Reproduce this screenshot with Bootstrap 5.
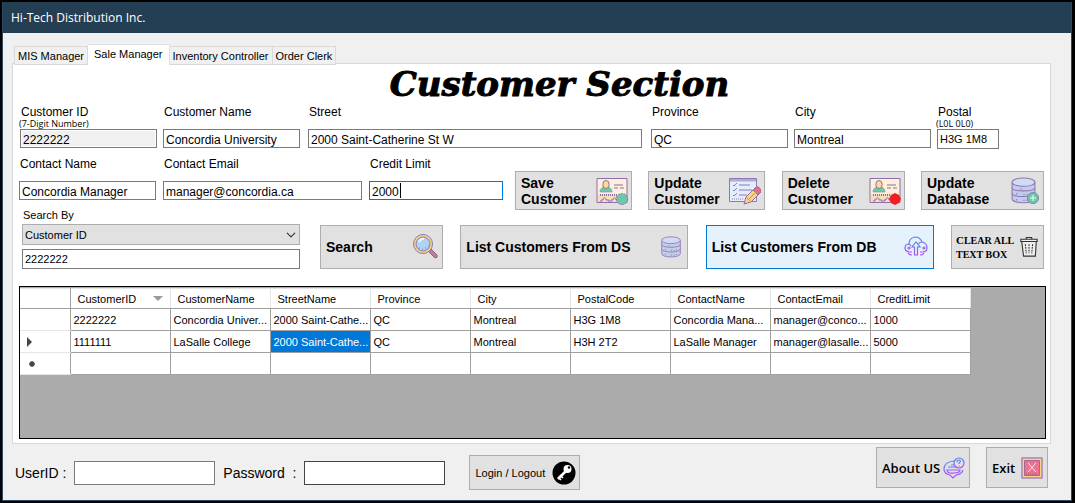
<!DOCTYPE html>
<html lang="en">
<head>
<meta charset="utf-8">
<meta name="viewport" content="width=device-width, initial-scale=1">
<title>Hi-Tech Distribution Inc.</title>
<link href="https://cdn.jsdelivr.net/npm/bootstrap@5.3.0/dist/css/bootstrap.min.css" rel="stylesheet">
<style>
  :root { --face: #f0f0f0; --edge: #7a7a7a; --btn: #e1e1e1; --btn-edge: #adadad; --line: #a0a0a0; --accent: #0078d7; }
  body { background: #000; color: #000; font: 12px/14px "Liberation Sans", Arial, sans-serif; padding: 2px 3px 2px 2px; }
  .compact { font-family: "Liberation Sans", Arial, sans-serif; font-size: 11px; }
  .app-window { background: var(--face); border: 1px solid #2b4a62; border-top: 0; }
  .title-strip { background: #243f54; color: #fff; height: 31px; padding: 0 8px; font: 12px/31px "Open Sans", "Noto Sans", sans-serif; }
  .work-area { padding: 11px 20px 0 9px; }
  .tab-strip { padding-left: 2px; border: 0; margin-bottom: -1px; position: relative; }
  .tab-strip .nav-link { color: #000; border: 1px solid #d9d9d9; border-left-width: 0; border-radius: 0; background: var(--face); padding: 0 3px; line-height: 18px; height: 19px; white-space: nowrap; }
  .tab-strip .first-tab { border-left-width: 1px; }
  .tab-strip .nav-link.active { background: #fff; color: #000; border-bottom: 0; height: 21px; padding: 0 6px; line-height: 19px; }
  .sheet { background: #fff; border: 1px solid #d9d9d9; padding: 0 4px 4px 6px; }
  h1 { font: italic bold 34px/41px "DejaVu Serif", serif; -webkit-text-stroke: 1px #000; margin: 0; padding-left: 54px; text-align: center; }
  .line-one { padding: 0 47px 0 1px; gap: 6px; }
  .line-one .roomy { padding: 0 3px 0 2px; }
  .line-two { padding-right: 2px; margin-top: 8px; gap: 7px; }
  .line-two .actions { padding: 14px 0 0 5px; }
  .line-three { padding: 0 2px 0 3px; gap: 20px; }
  .line-one label { display: block; height: 24px; padding-left: 1px; white-space: nowrap; }
  .line-one small { display: block; font: 9px/10px "Open Sans", "Noto Sans", sans-serif; margin-left: -2px; }
  .line-two label { display: block; height: 24px; padding-left: 1px; }
  .search-by label { display: block; height: 14px; line-height: 10px; padding-left: 1px; }
  .form-control, .form-select { border: 1px solid var(--edge); border-radius: 0; color: #000; font-size: 12px; line-height: 14px; padding: 2px 2px 0; height: 19px; min-height: 0; background-color: #fff; }
  .form-control[readonly] { background: var(--face); box-shadow: inset 0 0 0 1px #fff; }
  .form-control.editing { border-color: var(--accent); background: linear-gradient(#000, #000) 30px 1px / 1px 15px no-repeat #fff; }
  .form-control.compact, .form-select.compact { font-size: 11px; height: 20px; padding: 0 2px; }
  .form-select.compact { height: 21px; background-color: var(--btn); border-color: var(--btn-edge); background-position: right 3px center; background-size: 10px 10px; }
  .w-s { width: 62px; } .w-m { width: 137px; } .w-c { width: 134px; } .w-l { width: 199px; } .w-xl { width: 278px; }
  .btn { --bs-btn-color: #000; --bs-btn-bg: #e1e1e1; --bs-btn-border-color: #adadad; --bs-btn-border-radius: 0; --bs-btn-padding-x: 5px; --bs-btn-padding-y: 0; --bs-btn-font-size: 14px; --bs-btn-line-height: 16px; --bs-btn-font-weight: 700; display: flex; align-items: center; justify-content: space-between; text-align: left; }
  .btn svg { flex: none; }
  .tall { height: 39px; width: 117px; padding: 0 3px 0 5px; }
  .tall.wider { width: 123px; }
  .big { height: 44px; width: 228px; }
  .big.find { width: 123px; padding-right: 3px; }
  .big.wipe { width: 93px; font: bold 10px/14px "Liberation Serif", serif; padding: 0 4px; }
  .wipe .cap { font-size: 11px; }
  .btn.hot { --bs-btn-bg: #e5f1fb; --bs-btn-border-color: #0078d7; }
  .data-well { margin-top: 17px; background: #ababab; border: 1px solid #000; padding-top: 1px; }
  .data-well table { width: 950px; table-layout: fixed; border-collapse: collapse; background: #fff; line-height: 14px; border-top: 1px solid #e5e5e5; }
  .data-well th, .data-well td { border: 1px solid var(--line); border-left: 0; height: 22px; padding: 0 2px 0 3px; white-space: nowrap; overflow: hidden; }
  .data-well thead th { border-top-color: #e5e5e5; border-right-color: #e5e5e5; font-weight: 400; height: 20px; padding: 0 7px; }
  .data-well thead th:first-child { border-right-color: var(--line); }
  .data-well tbody th { padding-left: 5px; border-bottom-color: #e5e5e5; }
  .data-well td.picked { background: var(--accent); color: #fff; }
  .foot { padding: 3px 3px 10px 3px; }
  .foot label { font-size: 14px; line-height: 24px; white-space: pre; }
  .foot .form-control { width: 141px; height: 24px; }
  .foot .login { height: 35px; width: 111px; font-weight: 400; padding: 0 3px 0 5px; }
  .foot .end { height: 41px; font: 600 13px/18px "Open Sans", "Noto Sans", sans-serif; padding: 0 4px 0 5px; }
  .about { width: 94px; } .leave { width: 62px; }
  .dark { border-color: #444; }
</style>
</head>
<body class="min-vh-100 d-flex flex-column">
<svg width="0" height="0" class="position-absolute" aria-hidden="true">
  <defs>
    <linearGradient id="violet" x1="0" y1="0" x2="0" y2="1"><stop offset="0" stop-color="#4f8df5"/><stop offset="1" stop-color="#b44df0"/></linearGradient>
    <symbol id="card-face" viewBox="0 0 32 28">
      <path d="M1 1.500h30v24H1z" fill="#fdf0dc" stroke="#8f6da8"/>
      <path d="M2 17h28v8H2z" fill="#f7dcc0"/>
      <path d="M4 15c0-4 3-5 6-5s6 1 6 5z" fill="#6bc9a8" stroke="#7b9d9d" stroke-width=".7"/>
      <ellipse cx="10" cy="7.500" rx="3.200" ry="4" fill="#fbdc95" stroke="#8f6da8"/>
      <path d="M18 8h9M18 11h4M24 11h4" stroke="#8f6da8"/>
      <path d="M4 18h18" stroke="#8f6da8" stroke-width="2" stroke-dasharray="1 1"/>
      <path d="M5 25v-2h2c0-3 3-3 3 0h3v2M15 25v-2h2c0-3 3-3 3 0h2" fill="none" stroke="#8f6da8"/>
    </symbol>
    <symbol id="drum" viewBox="0 0 26 26">
      <path d="M2 5v16c0 5 22 5 22 0V5" fill="#c5cbea" stroke="#8f78b5"/>
      <ellipse cx="13" cy="5" rx="11" ry="4" fill="#cfdcf1" stroke="#8f78b5"/>
      <path d="M2 10c0 4.500 22 4.500 22 0M2 15.500c0 4.500 22 4.500 22 0" fill="none" stroke="#8f78b5"/>
      <path d="M6 16h1M10 11.500h1M13 17h1M16 17h1M19 16.500h1M6 22h1M13 22.500h1M16 22.500h1M19 22h1" stroke="#65719c"/>
    </symbol>
  </defs>
</svg>
<div class="app-window flex-grow-1 d-flex flex-column">
  <header class="title-strip">Hi-Tech Distribution Inc.</header>
  <main class="work-area flex-grow-1 d-flex flex-column">
    <nav class="nav nav-tabs tab-strip align-items-end compact">
      <a class="nav-link first-tab" href="#">MIS Manager</a>
      <a class="nav-link active" href="#" aria-current="page">Sale Manager</a>
      <a class="nav-link" href="#">Inventory Controller</a>
      <a class="nav-link" href="#">Order Clerk</a>
    </nav>
    <section class="sheet flex-grow-1 d-flex flex-column">
      <h1>Customer Section</h1>
      <div class="line-one d-flex align-items-start">
        <div><label for="cid">Customer ID<small>(7-Digit Number)</small></label><input id="cid" class="form-control w-m" value="2222222" readonly></div>
        <div><label for="cname">Customer Name</label><input id="cname" class="form-control w-m" value="Concordia University"></div>
        <div class="flex-grow-1 roomy"><label for="street">Street</label><input id="street" class="form-control" value="2000 Saint-Catherine St W"></div>
        <div><label for="prov">Province</label><input id="prov" class="form-control w-m" value="QC"></div>
        <div><label for="city">City</label><input id="city" class="form-control w-m" value="Montreal"></div>
        <div><label for="postal">Postal<small>(L0L 0L0)</small></label><input id="postal" class="form-control compact w-s" value="H3G 1M8"></div>
      </div>
      <div class="line-two d-flex align-items-start">
        <div><label for="contact">Contact Name</label><input id="contact" class="form-control w-m" value="Concordia Manager"></div>
        <div><label for="mail">Contact Email</label><input id="mail" class="form-control w-l" value="manager@concordia.ca"></div>
        <div><label for="credit">Credit Limit</label><input id="credit" class="form-control editing w-c" value="2000"></div>
        <div class="flex-grow-1 d-flex justify-content-between actions">
          <button type="button" class="btn tall">Save<br>Customer
            <svg width="32" height="28" viewBox="0 0 32 28"><use href="#card-face"/><circle cx="26" cy="22" r="5.500" fill="#6bc9a8" stroke="#8f6da8" stroke-dasharray="2 1"/></svg></button>
          <button type="button" class="btn tall">Update<br>Customer
            <svg width="32" height="28" viewBox="0 0 32 28"><path d="M.5 1.500h27v23H.5z" fill="#e4edfb" stroke="#8f78b5"/><path d="M1 2h26v2.500H1z" fill="#a9afd2"/><path d="M10 8h11M10 13h13M10 18h8" stroke="#8f78b5"/><path d="m4 8 1 1 3-3M4 13l1 1 3-3M4 18l1 1 3-3" fill="none" stroke="#7486be"/><path d="M3 22h12" stroke="#8f78b5" stroke-dasharray="1 1"/><path d="m15 27 2-7L27 10l5 5-10 10z" fill="#fbd386" stroke="#8f6da8"/><path d="m24 13 3-3q2-1 4 1.500t0 4L29 18z" fill="#ee6b84" stroke="#8f6da8"/><path d="m18 21 3 3M25 13l4 4M20 22l7-7" stroke="#c38b75"/></svg></button>
          <button type="button" class="btn tall wider">Delete<br>Customer
            <svg width="32" height="28" viewBox="0 0 32 28"><use href="#card-face"/><path d="m26 16 4 2 2 4-2 4-4 2-4-2-2-4 2-4z" fill="#f01d22"/></svg></button>
          <button type="button" class="btn tall wider">Update<br>Database
            <svg width="32" height="28" viewBox="0 0 32 28"><use href="#drum" x="2" y="0" width="27" height="27"/><circle cx="25" cy="21" r="5.500" fill="#6bc9a8" stroke="#7a8aa5"/><path d="M22 21h6M25 18v6" stroke="#fff"/></svg></button>
        </div>
      </div>
      <div class="line-three d-flex align-items-end">
        <div class="search-by w-xl compact"><label for="by">Search By</label>
          <select id="by" class="form-select compact"><option>Customer ID</option></select>
          <input class="form-control compact mt-1" aria-label="Search text" value="2222222"></div>
        <div class="flex-grow-1 d-flex justify-content-between">
          <button type="button" class="btn big find">Search
            <svg width="28" height="28" viewBox="0 0 28 28"><path d="m17 18 3-2 6 6q1 3-2 3z" fill="#b4829c" stroke="#92658b"/><circle cx="12" cy="11" r="9.500" fill="#f8d584" stroke="#8f78a8"/><circle cx="12" cy="11" r="7" fill="#aed3f5" stroke="#8f78b5"/><path d="M8 9q2-4 5-3" stroke="#edf8ff" stroke-width="2" fill="none"/><path d="M8 15h1M11 16h1M14 15h1M17 13h1" stroke="#7486be"/></svg></button>
          <button type="button" class="btn big">List Customers From DS
            <svg width="22" height="22"><use href="#drum"/></svg></button>
          <button type="button" class="btn big hot">List Customers From DB
            <svg width="24" height="24" viewBox="0 0 24 24" fill="none" stroke="url(#violet)" stroke-width="1.200"><path d="M8 17H5q-4-1-4-4 0-4 4-4 0-6 6-7 5 0 7 5 5 1 5 6 0 4-5 4h-2M4 9q2 0 3 2M18 7q-3 0-3 2"/><path d="M10.500 20v-8H8l4-5 4 5h-2.500v8zM8 20q-3 0-4-2M16 20q3 0 4-2"/><circle cx="5" cy="13" r="1"/><circle cx="20" cy="13" r="1"/></svg></button>
          <button type="button" class="btn big wipe"><span><span class="cap">C</span>LEAR ALL<br>TEXT BOX</span>
            <svg width="20" height="22" viewBox="0 0 22 24" fill="none" stroke="#333" stroke-width="1.200"><path d="M3 6h16l-1 16H5zM2 3.500h18V6H2zM8 3V1.500h6V3" fill="#eee"/><path d="m7 9 1 10M11 9v10M15 9l-1 10" stroke-dasharray="2 1"/></svg></button>
        </div>
      </div>
      <div class="data-well flex-grow-1 compact">
        <table>
          <colgroup><col style="width:50px"><col span="9" style="width:100px"></colgroup>
          <thead><tr><th></th><th><span class="d-flex justify-content-between align-items-center">CustomerID<svg width="10" height="5" class="me-n1"><path d="M0 0h10L5 5z" fill="#999"/></svg></span></th><th>CustomerName</th><th>StreetName</th><th>Province</th><th>City</th><th>PostalCode</th><th>ContactName</th><th>ContactEmail</th><th>CreditLimit</th></tr></thead>
          <tbody>
            <tr><th></th><td>2222222</td><td>Concordia Univer...</td><td>2000 Saint-Cathe...</td><td>QC</td><td>Montreal</td><td>H3G 1M8</td><td>Concordia Mana...</td><td>manager@conco...</td><td>1000</td></tr>
            <tr><th><svg class="d-block" width="8" height="10"><path d="M2 0v10l5-5z" fill="#444"/></svg></th><td>1111111</td><td>LaSalle College</td><td class="picked">2000 Saint-Cathe...</td><td>QC</td><td>Montreal</td><td>H3H 2T2</td><td>LaSalle Manager</td><td>manager@lasalle...</td><td>5000</td></tr>
            <tr><th><svg class="d-block" width="12" height="8"><path d="M7 1v6M4 4h6M5 2l4 4M9 2 5 6" stroke="#444" stroke-width="1.400"/></svg></th><td></td><td></td><td></td><td></td><td></td><td></td><td></td><td></td><td></td></tr>
          </tbody>
        </table>
      </div>
    </section>
    <footer class="foot d-flex align-items-start">
      <div class="d-flex align-items-center pt-2">
        <label for="uid">UserID :</label><input id="uid" class="form-control ms-2">
        <label for="pwd" class="ms-2">Password  :</label><input id="pwd" type="password" class="form-control dark ms-2">
        <button type="button" class="btn login compact ms-4">Login / Logout
          <svg width="24" height="24" viewBox="0 0 24 24"><circle cx="12" cy="12" r="11.500"/><path d="m6 18 8-8" stroke="#fff" stroke-width="2.500"/><path d="m6 16 3 3M8 14l3 3" stroke="#fff" stroke-width="1.500"/><circle cx="15.500" cy="8" r="4" fill="#fff"/><circle cx="17" cy="6.500" r="1.200"/></svg></button>
      </div>
      <div class="d-flex gap-3 ms-auto">
        <button type="button" class="btn end about">About US
          <svg width="22" height="22" viewBox="0 0 22 22" fill="none" stroke="url(#violet)" stroke-width="1.200"><path d="M11 4Q1 5 1 12q0 5 6 6l3 3 3-3q6-1 7-5"/><path d="M5 10h8M4 13q0 4 7 3 6 0 6-3zM8 8h3"/><circle cx="16" cy="6" r="5"/><path d="M14 5q0-2 2-2 3 1 0 3v1M16 8.500v1"/></svg></button>
        <button type="button" class="btn end leave">Exit
          <svg width="22" height="22" viewBox="0 0 22 22"><path d="M1 1h20v20H1z" fill="#f7d38c" stroke="#a887ae" stroke-width="1.500"/><path d="M3.500 3.500h15v15h-15z" fill="#ef718f" stroke="#a36a91"/><path d="m7 6 8 9M15 6l-8 9" stroke="#ffe5ea"/><path d="M5 17h12" stroke="#8f5586" stroke-dasharray="1 1"/></svg></button>
      </div>
    </footer>
  </main>
</div>
<script src="https://cdn.jsdelivr.net/npm/bootstrap@5.3.0/dist/js/bootstrap.bundle.min.js"></script>
</body>
</html>
